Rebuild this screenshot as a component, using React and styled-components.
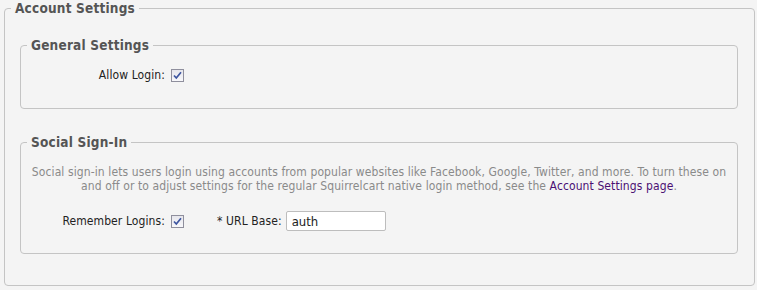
import React from 'react';
import styled, { createGlobalStyle } from 'styled-components';

const Global = createGlobalStyle`
  html, body {
    margin: 0;
    padding: 0;
    background: #f4f4f4;
  }
  body {
    font-family: "DejaVu Sans Condensed", "DejaVu Sans", sans-serif;
    font-size: 12px;
    letter-spacing: 0.1px;
    color: #222;
  }
`;

const Page = styled.div`
  padding: 0 0 0 4px;
  width: 755px;
  box-sizing: border-box;
`;

const Outer = styled.fieldset`
  border: 1px solid #c4c4c4;
  border-radius: 4px;
  margin: 0;
  padding: 21px 0 31px 0;
`;

const Group = styled.fieldset`
  border: 1px solid #c4c4c4;
  border-radius: 4px;
  margin: 0 16px 0 15px;
  padding: 9px 0 ${p => p.$bottom || '20px'} 0;
  & + & {
    margin-top: 25px;
  }
`;

const Legend = styled.legend`
  font-family: "DejaVu Sans Condensed", "DejaVu Sans", sans-serif;
  font-weight: bold;
  font-size: 13.5px;
  letter-spacing: 0.2px;
  color: #555;
  padding: 0 4px;
  margin-left: 6px;
`;

const Row = styled.div`
  display: flex;
  align-items: center;
  height: 26px;
`;

const Label = styled.label`
  width: ${p => p.$width || 'auto'};
  text-align: right;
  padding-right: ${p => p.$pad || '6px'};
  box-sizing: border-box;
  margin-left: ${p => p.$gap || '0'};
`;

const Check = styled.span`
  width: 11px;
  height: 11px;
  border: 1px solid #8f8f9d;
  background: linear-gradient(#e6e6ec, #f8f8fb);
  display: inline-flex;
  align-items: center;
  justify-content: center;
`;

const Input = styled.input`
  width: 100px;
  height: 20px;
  box-sizing: border-box;
  border: 1px solid #bdbdbd;
  border-radius: 2px;
  background: #fff;
  font: inherit;
  font-size: 13px;
  color: #222;
  padding: 0 5px;
  outline: none;
`;

const Intro = styled.p`
  margin: 6px 0 15px 0;
  text-align: center;
  color: #8a8a8a;
  line-height: 14px;
  a {
    color: #4b0f73;
    text-decoration: none;
  }
`;

function Tick() {
  return (
    <Check>
      <svg width="9" height="9" viewBox="0 0 9 9">
        <path d="M1 4.5 L3.3 7 L8 1.2" fill="none" stroke="#3d55a0" strokeWidth="1.7" />
      </svg>
    </Check>
  );
}

export default function App() {
  return (
    <Page>
      <Global />
      <Outer>
        <Legend>Account Settings</Legend>
        <Group>
          <Legend>General Settings</Legend>
          <Row>
            <Label $width="150px">Allow Login:</Label>
            <Tick />
          </Row>
        </Group>
        <Group $bottom="19px">
          <Legend>Social Sign-In</Legend>
          <Intro>
            Social sign-in lets users login using accounts from popular websites like Facebook, Google, Twitter, and more. To turn these on and off or to adjust settings for the regular Squirrelcart native login method, see the <a href="#">Account Settings page</a>.
          </Intro>
          <Row>
            <Label $width="150px">Remember Logins:</Label>
            <Tick />
            <Label $gap="33px" $pad="4px">* URL Base:</Label>
            <Input defaultValue="auth" />
          </Row>
        </Group>
      </Outer>
    </Page>
  );
}
